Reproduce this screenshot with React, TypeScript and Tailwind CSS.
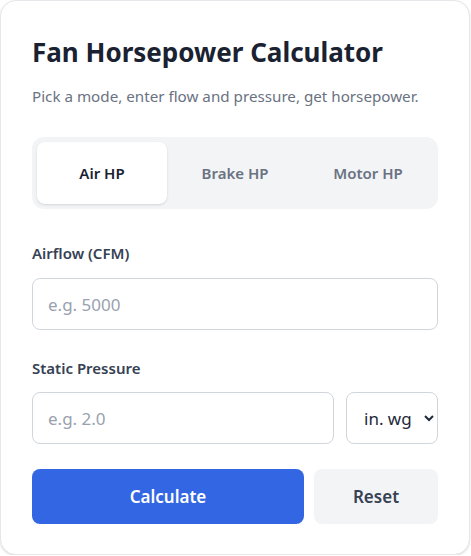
import { useState } from 'react'

const modes = ['Air HP', 'Brake HP', 'Motor HP']

export default function App() {
  const [mode, setMode] = useState(0)

  return (
    <div className="w-[471px] bg-white" style={{ fontFamily: '"Noto Sans", "Open Sans", sans-serif' }}>
      <div className="w-[470px] h-[555px] rounded-2xl border border-gray-200 bg-white px-[31px] pt-[29px] shadow-sm">
        <h1 className="text-[26px] font-bold leading-[44px] text-[#1a2232]">Fan Horsepower Calculator</h1>
        <p className="mt-[11px] text-[15.2px] leading-[22px] text-gray-500">
          Pick a mode, enter flow and pressure, get horsepower.
        </p>

        <div className="mt-[30px] grid grid-cols-3 gap-[3px] rounded-xl bg-gray-100 p-[5px]">
          {modes.map((m, i) => (
            <button
              key={m}
              onClick={() => setMode(i)}
              className={
                i === mode
                  ? 'h-[62px] rounded-lg bg-white text-[15px] font-semibold text-[#1a2232] shadow-sm'
                  : 'h-[62px] rounded-lg text-[15px] font-semibold text-gray-500'
              }
            >
              {m}
            </button>
          ))}
        </div>

        <label className="mt-[33px] block text-[15px] font-semibold leading-[22px] text-gray-700">Airflow (CFM)</label>
        <input
          placeholder="e.g. 5000"
          className="mt-[14px] block h-[52px] w-full rounded-lg border border-gray-300 px-[15px] text-[17px] text-gray-800 outline-none placeholder:text-gray-400"
        />

        <label className="mt-[27px] block text-[15px] font-semibold leading-[22px] text-gray-700">Static Pressure</label>
        <div className="mt-[13px] flex gap-3">
          <input
            placeholder="e.g. 2.0"
            className="block h-[52px] min-w-0 flex-1 rounded-lg border border-gray-300 px-[15px] text-[17px] text-gray-800 outline-none placeholder:text-gray-400"
          />
          <select className="h-[52px] w-[92px] rounded-lg border border-gray-300 bg-white pl-[13px] pr-1 text-[17px] text-gray-800 outline-none">
            <option>in. wg</option>
            <option>Pa</option>
          </select>
        </div>

        <div className="mt-[25px] flex gap-[10px]">
          <button className="h-[55px] w-[272px] rounded-lg bg-[#3366e3] text-[17px] font-semibold text-white">
            Calculate
          </button>
          <button className="h-[55px] flex-1 rounded-lg bg-gray-100 text-[17px] font-semibold text-gray-700">
            Reset
          </button>
        </div>
      </div>
    </div>
  )
}
